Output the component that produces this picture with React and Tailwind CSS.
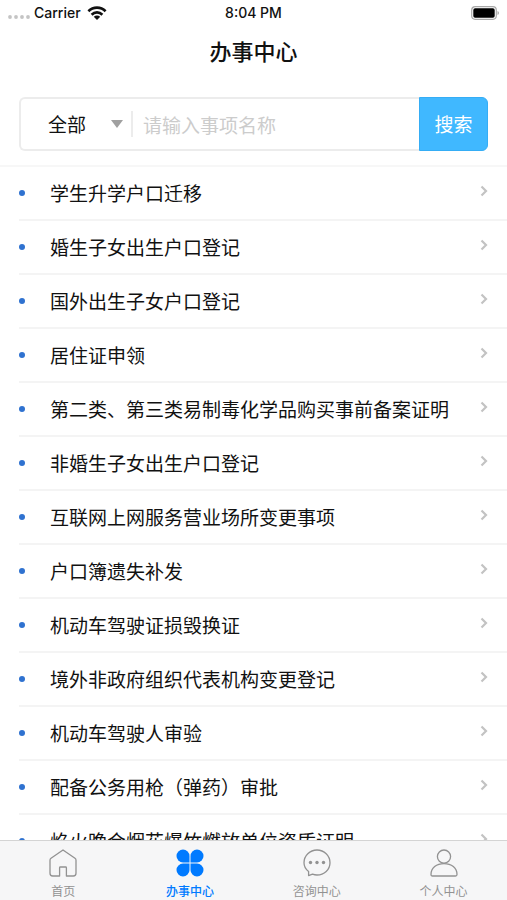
import { useState } from "react";

const services = [
  "学生升学户口迁移",
  "婚生子女出生户口登记",
  "国外出生子女户口登记",
  "居住证申领",
  "第二类、第三类易制毒化学品购买事前备案证明",
  "非婚生子女出生户口登记",
  "互联网上网服务营业场所变更事项",
  "户口簿遗失补发",
  "机动车驾驶证损毁换证",
  "境外非政府组织代表机构变更登记",
  "机动车驾驶人审验",
  "配备公务用枪（弹药）审批",
  "焰火晚会烟花爆竹燃放单位资质证明",
];

const tabs = [
  {
    id: "home",
    label: "首页",
    icon: (
      <svg className="w-7 h-7" viewBox="0 0 28 28" fill="none" stroke="currentColor" strokeWidth="1.3" strokeLinejoin="round">
        <path d="M14 1 2 9.200Q1 9.900 1 11.200V24.300Q1 27 3.700 27H10.600V18.800Q10.600 18 11.400 18H16.600Q17.400 18 17.400 18.800V27H24.300Q27 27 27 24.300V11.200Q27 9.900 26 9.200Z" />
      </svg>
    ),
  },
  {
    id: "services",
    label: "办事中心",
    icon: (
      <svg className="w-7 h-7" viewBox="0 0 28 28" fill="currentColor">
        <path d="M7 .5A6.5 6.5 0 0 0 7 13.5H13.5V7A6.5 6.5 0 0 0 7 .5Z" />
        <path d="M21 .5A6.5 6.5 0 0 1 21 13.5H14.5V7A6.5 6.5 0 0 1 21 .5Z" />
        <path d="M7 27.5A6.5 6.5 0 0 1 7 14.5H13.5V21A6.5 6.5 0 0 1 7 27.5Z" />
        <path d="M21 27.5A6.5 6.5 0 0 0 21 14.5H14.5V21A6.5 6.5 0 0 0 21 27.5Z" />
      </svg>
    ),
  },
  {
    id: "consult",
    label: "咨询中心",
    icon: (
      <svg className="w-7 h-7" viewBox="0 0 28 28" fill="none" stroke="currentColor" strokeWidth="1.3" strokeLinejoin="round">
        <path d="M5.600 26.600V22.400C2.800 20.300 1 17.200 1 13.700 1 6.700 6.800 1 14 1S27 6.700 27 13.700 21.200 26 14 26C12.400 26 10.900 25.700 9.500 25.200Z" />
        <g fill="currentColor" stroke="none">
          <circle cx="7.500" cy="13.500" r="1.700" />
          <circle cx="14" cy="13.500" r="1.700" />
          <circle cx="20.500" cy="13.500" r="1.700" />
        </g>
      </svg>
    ),
  },
  {
    id: "profile",
    label: "个人中心",
    icon: (
      <svg className="w-7 h-7" viewBox="0 0 28 28" fill="none" stroke="currentColor" strokeWidth="1.3" strokeLinejoin="round">
        <circle cx="14" cy="7.600" r="6.600" />
        <path d="M1 25.500C1 19 6.500 14.600 14 14.600S27 19 27 25.500Q27 27 25.500 27H2.500Q1 27 1 25.500Z" />
      </svg>
    ),
  },
];

function StatusBar() {
  return (
    <div className="grid grid-cols-3 items-center h-[26px] px-2 text-sm font-medium font-[Inter,sans-serif]">
      <div className="flex items-center">
        <svg className="w-[22px] h-1 mt-2" viewBox="0 0 22 4" fill="#c4c4c4">
          <circle cx="2" cy="2" r="1.900" />
          <circle cx="8" cy="2" r="1.900" />
          <circle cx="14" cy="2" r="1.900" />
          <circle cx="20" cy="2" r="1.900" />
        </svg>
        <span className="ml-1">Carrier</span>
        <svg className="w-5 h-[14px] ml-1.5" viewBox="0 0 18 13" fill="none" stroke="currentColor" strokeWidth="2.400">
          <path d="M1 4.900C5.500.4 12.500.4 17 4.900" />
          <path d="M4 8.100C6.900 5.200 11.100 5.200 14 8.100" />
          <path d="M9 13 6 10C7.700 8.500 10.300 8.500 12 10Z" fill="currentColor" stroke="none" />
        </svg>
      </div>
      <span className="text-center">8:04 PM</span>
      <svg className="w-[30px] h-[14px] justify-self-end" viewBox="0 0 30 14" fill="none">
        <rect x="2.700" y=".7" width="24.600" height="12.600" rx="3.500" stroke="#a9a9a9" strokeWidth="1.200" />
        <rect x="4.300" y="2.300" width="21.400" height="9.400" rx="1.800" fill="#000" />
        <path d="M28.500 4.900Q30 5.500 30 7T28.500 9.100Z" fill="#a9a9a9" />
      </svg>
    </div>
  );
}

function SearchBar() {
  return (
    <form
      className="flex h-[54px] mx-[19px]"
      onSubmit={(e) => e.preventDefault()}
    >
      <div className="flex flex-1 min-w-0 items-center border-2 border-r-0 border-[#ececec] rounded-l-md">
        <div className="relative w-28 h-[26px] border-r-2 border-[#ececec] shrink-0">
          <select
            aria-label="事项分类"
            className="appearance-none w-full h-full pl-[27px] text-[19px] leading-[26px] bg-transparent outline-none"
          >
            <option>全部</option>
          </select>
          <svg className="absolute right-2 top-[9px] w-3 h-2 pointer-events-none" viewBox="0 0 12 8" fill="#a0a0a0">
            <path d="M0 0H12L6 8Z" />
          </svg>
        </div>
        <input
          type="text"
          aria-label="事项名称"
          placeholder="请输入事项名称"
          className="flex-1 min-w-0 h-full pl-2.5 text-[19px] outline-none placeholder:text-[#cccccc]"
        />
      </div>
      <button
        type="submit"
        className="w-[69px] text-[19px] text-white bg-[#40b8ff] border border-[#35adf5] rounded-r-md"
      >
        搜索
      </button>
    </form>
  );
}

function ServiceRow({ title }) {
  return (
    <li>
      <a href="#" className="flex items-center h-[54px] ml-[19px] pr-[19px] border-b-2 border-[#f4f4f4]">
        <span className="w-1.5 h-1.5 mr-[25px] rounded-full bg-[#2f72d0] shrink-0" />
        <span className="flex-1 text-[19px] leading-7 whitespace-nowrap">{title}</span>
        <svg className="w-2 h-3 mb-1 shrink-0" viewBox="0 0 8 12" fill="none" stroke="#c3c3c3" strokeWidth="2.200">
          <path d="M1.500 1.500 6 6 1.500 10.500" />
        </svg>
      </a>
    </li>
  );
}

function App() {
  const [activeTab, setActiveTab] = useState("services");

  return (
    <div className="flex flex-col h-screen bg-white text-[#111111] font-['Noto_Sans_CJK_SC',sans-serif]">
      <header className="pb-3.5 border-b-2 border-[#f7f7f7]">
        <StatusBar />
        <h1 className="h-[71px] pt-2 text-center text-[22px] leading-8 font-medium">
          办事中心
        </h1>
        <SearchBar />
      </header>

      <main className="flex-1 min-h-0 overflow-y-auto [scrollbar-width:none]">
        <ul>
          {services.map((title) => (
            <ServiceRow key={title} title={title} />
          ))}
        </ul>
      </main>

      <nav className="grid grid-cols-4 h-[60px] bg-[#f6f6f7] border-t border-[#d4d4d4] shrink-0">
        {tabs.map((tab) => (
          <button
            key={tab.id}
            onClick={() => setActiveTab(tab.id)}
            className={`flex flex-col items-center pt-2 gap-1 ${
              activeTab === tab.id
                ? "text-[#007aff] font-medium"
                : "text-[#929292]"
            }`}
          >
            {tab.icon}
            <span className="text-xs leading-5">{tab.label}</span>
          </button>
        ))}
      </nav>
    </div>
  );
}

export default App;
